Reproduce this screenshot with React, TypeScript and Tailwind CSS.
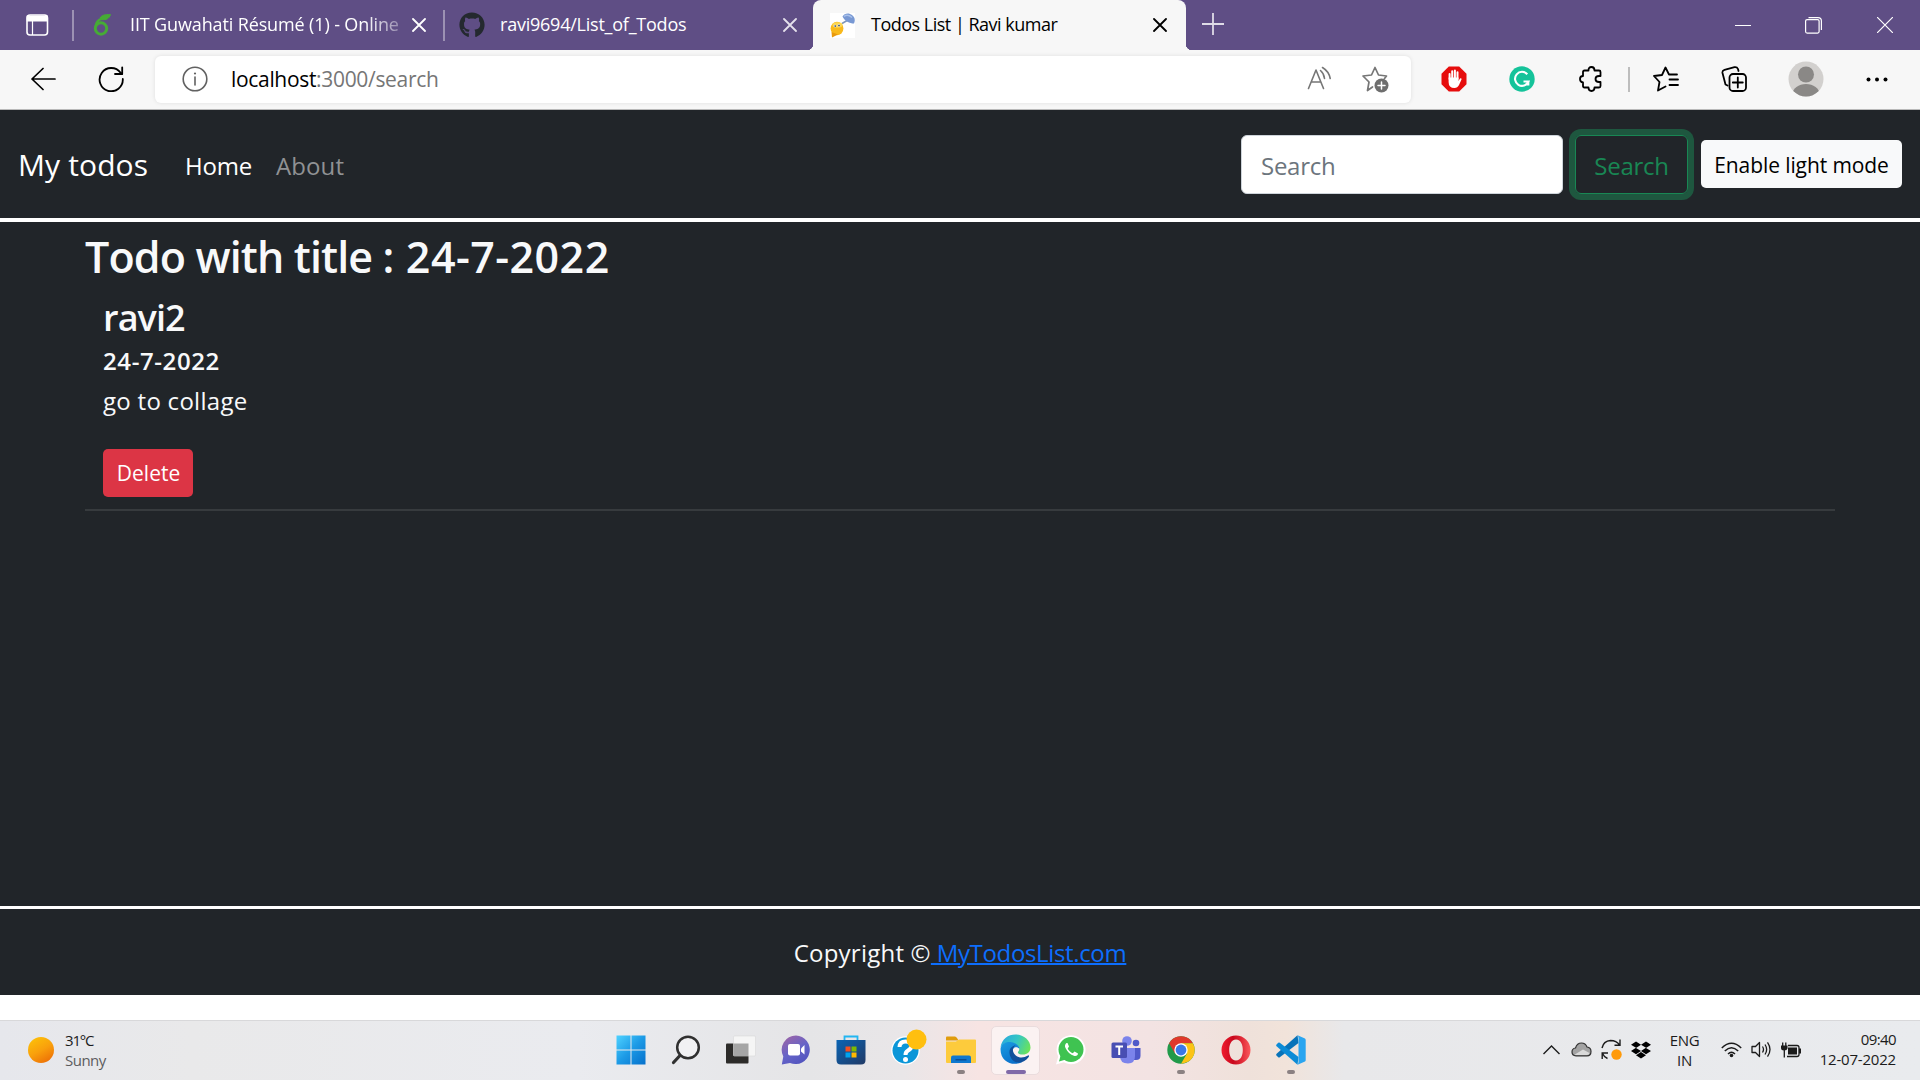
import React from "react";
import { FaGithub, FaDropbox } from "react-icons/fa";

function CloseGlyph({ className = "" }: { className?: string }) {
  return (
    <svg width="14" height="14" viewBox="0 0 14 14" className={"shrink-0 " + className} fill="none" stroke="currentColor" strokeWidth="1.8" strokeLinecap="round">
      <path d="M1 1L13 13M13 1L1 13" />
    </svg>
  );
}

function TabBar() {
  return (
    <div className="flex h-[50px] items-center bg-[#5f4e85] text-[18px] text-white">
      <svg className="ml-[26px] shrink-0" width="23" height="22" viewBox="0 0 23 22" fill="none" stroke="white" strokeWidth="1.6">
        <rect x="1" y="1" width="20.5" height="20" rx="3" />
        <path d="M1.5 2.2h19.5v4.4h-19.5z" fill="white" />
        <path d="M6.5 6v15" strokeWidth="1.2" />
      </svg>
      <div className="ml-[23px] h-[31px] w-[2px] shrink-0 bg-[#9c91b3]" />
      <div className="flex h-full w-[369px] shrink-0 items-center">
        <svg className="ml-[19px] shrink-0" width="20" height="22" viewBox="0 0 20 22" fill="none" stroke="#46ab36">
          <circle cx="8" cy="14.5" r="5.7" strokeWidth="3" />
          <path d="M2.6 13C3 7 7 3.5 14 4" strokeWidth="2.4" />
          <path d="M7 4C9 .8 12 .6 17.5.6C16 5 13 6 9 5.6" fill="#46ab36" strokeWidth="1" />
        </svg>
        <div className="mb-[2px] ml-[17px] w-[270px] overflow-hidden whitespace-nowrap tracking-[-0.13px] [mask-image:linear-gradient(to_right,black_87%,#0005_100%)]">
          IIT Guwahati Résumé (1) - Online
        </div>
        <CloseGlyph className="ml-[12px]" />
      </div>
      <div className="h-[31px] w-[2px] shrink-0 bg-[#9c91b3]" />
      <div className="flex h-full w-[368px] shrink-0 items-center">
        <FaGithub size={26} color="#24292f" className="ml-[14px] shrink-0" />
        <div className="mb-[2px] ml-[15px] w-[270px] whitespace-nowrap tracking-[-0.23px]">ravi9694/List_of_Todos</div>
        <CloseGlyph className="ml-[13px] text-[#e4e0ec]" />
      </div>
      <div className="relative flex h-full w-[373px] shrink-0 items-center rounded-t-[8px] bg-[#f7f7f7] text-black">
        <span className="absolute bottom-0 -left-[6px] h-[6px] w-[6px] bg-[radial-gradient(circle_at_0_0,#5f4e85_6px,#f7f7f7_6.5px)]" />
        <span className="absolute bottom-0 -right-[6px] h-[6px] w-[6px] bg-[radial-gradient(circle_at_100%_0,#5f4e85_6px,#f7f7f7_6.5px)]" />
        <svg className="ml-[17px] shrink-0" width="25" height="25" viewBox="0 0 25 25">
          <rect width="25" height="25" fill="white" />
          <path d="M12 10.500L18 7" stroke="#7f95b8" strokeWidth="1.5" />
          <path d="M12.500 3.500C14 1 17 0 20 1C24 2.500 26 6 24 10.500C19.500 10.500 14.500 8 12.500 3.500Z" fill="#7898d3" />
          <path d="M14 3.500C16 1.800 19 2 22 4.500" stroke="#a9c1ea" strokeWidth="1.6" fill="none" />
          <ellipse cx="7" cy="15.500" rx="6.400" ry="6.800" fill="#f9b91c" />
          <path d="M1.500 19L2 24.500L8 21.500Z" fill="#e99a0c" />
          <ellipse cx="7.500" cy="12" rx="5" ry="2.800" fill="#fdd752" />
          <circle cx="5" cy="13" r="1.300" fill="#dde5ee" />
          <circle cx="8.800" cy="12.500" r="1.300" fill="#dde5ee" />
          <circle cx="5.200" cy="13.100" r=".8" fill="#2c3c5a" />
          <circle cx="9" cy="12.600" r=".8" fill="#2c3c5a" />
        </svg>
        <div className="mb-[2px] ml-[16px] w-[270px] whitespace-nowrap tracking-[-0.5px]">Todos List | Ravi kumar</div>
        <CloseGlyph className="ml-[12px]" />
      </div>
      <svg className="mb-[2px] ml-[16px] shrink-0" width="22" height="22" viewBox="0 0 22 22" stroke="#dfdce7" strokeWidth="1.8">
        <path d="M0 11h22M11 0v22" />
      </svg>
      <div className="ml-auto flex items-center pr-[27px]">
        <svg width="16" height="16" viewBox="0 0 16 16" stroke="white"><path d="M0 8.500h16" /></svg>
        <svg className="ml-[54px]" width="17" height="17" viewBox="0 0 17 17" fill="none" stroke="white" strokeWidth="1.200">
          <rect x=".6" y="2.600" width="13.500" height="13.500" rx="1.500" />
          <path d="M3.500 .6H13Q16.400 .6 16.400 4V13" />
        </svg>
        <svg className="ml-[55px]" width="16" height="16" viewBox="0 0 16 16" stroke="white" strokeWidth="1.200"><path d="M0 0L16 16M16 0L0 16" /></svg>
      </div>
    </div>
  );
}

function Toolbar() {
  return (
    <div className="flex h-[60px] items-center border-b border-[#b9b9b9] bg-[#f7f7f7] pb-[1px]">
      <svg className="ml-[31px] shrink-0" width="25" height="24" viewBox="0 0 25 24" fill="none" stroke="black" strokeWidth="1.700" strokeLinecap="round" strokeLinejoin="round">
        <path d="M12 1.500L1 12L12 22.500M1 12H24" />
      </svg>
      <svg className="ml-[42px] shrink-0" width="27" height="26" viewBox="0 0 27 26" fill="none" stroke="black" strokeWidth="1.800" strokeLinecap="round" strokeLinejoin="round">
        <path d="M24.800 13A11.600 11.600 0 1 1 22.600 6.800L24 8" />
        <path d="M24.200 1.300V8H17" />
      </svg>
      <div className="ml-[30px] flex h-[47px] w-[1256px] shrink-0 items-center rounded-[6px] bg-white shadow-[0_0_4px_rgba(0,0,0,0.1)]">
        <svg className="ml-[27px] shrink-0" width="26" height="26" viewBox="0 0 26 26" fill="none" stroke="#616161" strokeWidth="1.600">
          <circle cx="13" cy="13" r="11.800" />
          <path d="M13 11V19" strokeLinecap="round" />
          <circle cx="13" cy="7.500" r="1.100" fill="#616161" stroke="none" />
        </svg>
        <div className="ml-[23px] pt-[2px] whitespace-nowrap text-[21px] tracking-[-0.32px] text-[#767676]">
          <span className="text-black">localhost</span>:3000/search
        </div>
        <svg className="mb-[2px] ml-auto shrink-0" width="25" height="24" viewBox="0 0 25 24" fill="none" stroke="#767676" strokeWidth="1.600" strokeLinecap="round" strokeLinejoin="round">
          <path d="M1.500 22.500L9 4L16.500 22.500M4.200 16H13.800" />
          <path d="M13.500 4.500Q17 7.500 17.500 12.500M15.500 1.500Q22 5.500 23.200 12.500" />
        </svg>
        <svg className="mr-[22px] ml-[30px] shrink-0" width="27" height="27" viewBox="0 0 27 27" fill="none" stroke="#767676" strokeWidth="1.700" strokeLinejoin="round" strokeLinecap="round">
          <path d="M10.500 21L5.500 24.500L7 16L1 10L9.500 9L13 1.500L16.500 9L24.500 10L22.500 12.500" />
          <circle cx="19.500" cy="19.500" r="7" fill="#6e6e6e" stroke="none" />
          <path d="M16 19.500H23M19.500 16V23" stroke="white" strokeWidth="1.500" />
        </svg>
      </div>
      <svg className="ml-[30px] shrink-0" width="26" height="26" viewBox="0 0 26 26">
        <path d="M7.800 .5H18.200L25.500 7.800V18.200L18.200 25.500H7.800L.5 18.200V7.800Z" fill="#e60d0d" />
        <path d="M8.600 13V8M11.200 13V5.200M13.900 13V4.500M16.500 13V6.300" stroke="white" strokeWidth="2" strokeLinecap="round" />
        <path d="M7.600 11.500H17.500V15L19 12.500Q20.800 11.800 20.500 13.500L18 19Q16.500 22 13.500 22Q7.600 22 7.600 16Z" fill="white" />
      </svg>
      <svg className="ml-[42px] shrink-0" width="26" height="26" viewBox="0 0 26 26" fill="none" stroke="white" strokeWidth="2.100">
        <circle cx="13" cy="13" r="12.700" fill="#15c39a" stroke="none" />
        <path d="M18.300 8.200A7 7 0 1 0 19.500 15.500H14.500M19.300 14.500V19.500" />
      </svg>
      <svg className="ml-[44px] shrink-0" width="25" height="26" viewBox="0 0 25 26" fill="none" stroke="black" strokeWidth="1.800" strokeLinejoin="round">
        <path d="M5.500 4.500H9.500Q9.500 1 12.500 1Q15.500 1 15.500 4.500H20Q21.500 4.500 21.500 6V10H20Q16.500 10 16.500 13Q16.500 16 20 16H21.500V20Q21.500 21.500 20 21.500H15.500Q15.500 25 12.500 25Q9.500 25 9.500 21.500H5.500Q4 21.500 4 20V16.500Q1 16 1 13Q1 10 4 10V6Q4 4.500 5.500 4.500Z" />
      </svg>
      <div className="ml-[24px] h-[25px] w-[2px] shrink-0 bg-[#bdbdbd]" />
      <svg className="ml-[23px] shrink-0" width="26" height="26" viewBox="0 0 26 26" fill="none" stroke="black" strokeWidth="1.800" strokeLinejoin="round" strokeLinecap="round">
        <path d="M12.500 20.500L5 24.500L6.500 16L1 10L9 9L12.500 1.500L16 8.500H24M16.500 13.500H25M16.500 19H25" />
      </svg>
      <svg className="ml-[42px] shrink-0" width="27" height="27" viewBox="0 0 27 27" fill="none" stroke="black" strokeWidth="1.800" strokeLinejoin="round" strokeLinecap="round">
        <path d="M6.500 19.500L4.500 18.500L1.500 7Q1 4.500 3.500 3.800L13.500 1.200Q16 .8 17 3L17.500 5" />
        <rect x="8.500" y="8" width="16.500" height="17" rx="3.500" />
        <path d="M11.800 16.500H21.800M16.800 11.500V21.500" />
      </svg>
      <svg className="ml-[40px] shrink-0" width="36" height="36" viewBox="0 0 36 36">
        <defs><clipPath id="avatar"><circle cx="18" cy="18" r="17.500" /></clipPath></defs>
        <circle cx="18" cy="18" r="17.500" fill="#d2d0ce" />
        <g clipPath="url(#avatar)" fill="#8a8886">
          <circle cx="18" cy="13.500" r="8" />
          <ellipse cx="18" cy="33" rx="13.500" ry="10" />
        </g>
      </svg>
      <svg className="ml-[42px] shrink-0" width="22" height="5" viewBox="0 0 22 5"><circle cx="2.500" cy="2.500" r="2" /><circle cx="11" cy="2.500" r="2" /><circle cx="19.500" cy="2.500" r="2" /></svg>
    </div>
  );
}

function Navbar() {
  return (
    <nav className="flex h-[108px] items-center pl-[18px] pr-[18px] text-white">
      <div className="w-[167px] whitespace-nowrap text-[30px] tracking-[0.12px]">My todos</div>
      <div className="w-[91px] pt-[3px] text-[24px] tracking-[-0.2px]">Home</div>
      <div className="pt-[3px] text-[24px] tracking-[0.1px] text-[#909294]">About</div>
      <input
        className="ml-auto h-[59px] w-[322px] rounded-[6px] border-[1.5px] border-[#ced4da] bg-white px-[19px] pt-[2px] text-[24px] tracking-[-0.26px] outline-none placeholder:text-[#6c757d]"
        placeholder="Search"
      />
      <button className="ml-[12px] h-[59px] w-[113px] rounded-[6px] border-[1.5px] border-[#198754] pt-[3px] text-[24px] tracking-[-0.26px] text-[#198754] shadow-[0_0_0_6px_#1e573f]">
        Search
      </button>
      <button className="ml-[13px] h-[48px] w-[201px] rounded-[5px] bg-[#f8f9fa] pt-[3px] text-[21px] tracking-[-0.1px] text-black">Enable light mode</button>
    </nav>
  );
}

function Page() {
  return (
    <div className="flex h-[885px] flex-col bg-[#212529] text-[#f8f9fa]">
      <Navbar />
      <main className="h-[688px] border-t-[4px] border-white px-[85px] pt-[9px]">
        <h2 className="text-[43px] leading-[52px] font-semibold tracking-[-0.85px] whitespace-pre">
          Todo with title : <span className="ml-[2px] tracking-[0.45px]">24-7-2022</span>
        </h2>
        <div className="pl-[18px]">
          <h4 className="mt-[13px] text-[36px] leading-[43px] font-semibold tracking-[-0.9px]">ravi2</h4>
          <h6 className="mt-[7px] text-[24px] leading-[29px] font-semibold tracking-[0.6px]">24-7-2022</h6>
          <p className="mt-[8px] text-[24px] leading-[36px] tracking-[0.28px]">go to collage</p>
          <button className="mt-[30px] block h-[48px] w-[90px] rounded-[5px] bg-[#dc3545] pt-[2px] pl-[1px] text-[21px] text-white">Delete</button>
        </div>
        <div className="mt-[12px] h-[2px] bg-[#373b3e]" />
      </main>
      <footer className="grow border-t-[3px] border-white pt-[26px] text-center text-[24px] leading-[36px] whitespace-pre">
        <span className="tracking-[0.23px]">Copyright ©</span>
        <a className="tracking-[-0.35px] text-[#0d6efd] underline decoration-2"> MyTodosList.com</a>
      </footer>
    </div>
  );
}

function Slot({ children, mark, active }: { children: React.ReactNode; mark?: boolean; active?: boolean }) {
  return (
    <div className="relative flex h-full w-[55px] shrink-0 items-center justify-center">
      {active && <div className="absolute top-[5px] left-[3px] h-[49px] w-[49px] rounded-[5px] border border-[#eadcdd] bg-[#fbf2f2]" />}
      <div className="relative">{children}</div>
      {mark && <div className="absolute bottom-[4px] h-[4px] w-[8px] rounded-full bg-[#8b8182]" />}
      {active && <div className="absolute bottom-[4px] h-[4px] w-[20px] rounded-full bg-[#8069a8]" />}
    </div>
  );
}

function TaskIcons() {
  return (
    <>
      <Slot>
        <svg width="30" height="30" viewBox="0 0 30 30">
          <defs><linearGradient id="win" x1="0" y1="0" x2="1" y2="1"><stop stopColor="#4fd2ff" /><stop offset=".5" stopColor="#1c9ae6" /><stop offset="1" stopColor="#0670cb" /></linearGradient></defs>
          <path d="M.5.500H14.500V14.500H.5ZM15.500.500H29.500V14.500H15.500ZM.5 15.500H14.500V29.500H.5ZM15.500 15.500H29.500V29.500H15.500Z" fill="url(#win)" />
        </svg>
      </Slot>
      <Slot>
        <svg width="30" height="30" viewBox="0 0 30 30" fill="none" stroke="#303030" strokeLinecap="round">
          <circle cx="17" cy="12.500" r="10.800" fill="#f1f1f3" strokeWidth="2.500" />
          <path d="M9 20.500L2.500 27.500" strokeWidth="3.200" />
        </svg>
      </Slot>
      <Slot>
        <svg width="31" height="30" viewBox="0 0 31 30">
          <rect x="1" y="8.500" width="22.500" height="20" rx="1" fill="#2c2b29" />
          <rect x="8.500" y="1" width="22" height="20" rx="1" fill="#f5f5f5" stroke="#d9d9d9" strokeWidth=".6" />
          <rect x="8.500" y="8.500" width="15" height="12.500" fill="#a5a5a5" />
        </svg>
      </Slot>
      <Slot>
        <svg width="30" height="30" viewBox="0 0 30 30">
          <defs><linearGradient id="chat" x1=".2" y1="0" x2=".8" y2="1"><stop stopColor="#9b65a8" /><stop offset=".5" stopColor="#6664c8" /><stop offset="1" stopColor="#4f52bd" /></linearGradient></defs>
          <path d="M15 .5A14.300 14.300 0 1 1 9 28L.8 29.500L2.300 21.500A14.300 14.300 0 0 1 15 .5Z" fill="url(#chat)" />
          <rect x="7" y="9" width="12" height="11.500" rx="2" fill="white" />
          <path d="M20 13.500L23.500 10V19.500L20 16.500Z" fill="white" />
        </svg>
      </Slot>
      <Slot>
        <svg width="30" height="30" viewBox="0 0 30 30">
          <defs><linearGradient id="store" x1="0" y1="0" x2="1" y2="1"><stop stopColor="#0a64b4" /><stop offset="1" stopColor="#213a66" /></linearGradient></defs>
          <path d="M8.500 6V1.500H21.500V6" fill="none" stroke="#22b6f2" strokeWidth="1.800" />
          <path d="M.5 5H29.500V25Q29.500 29.500 25 29.500H5Q.5 29.500 .5 25Z" fill="url(#store)" />
          <path d="M9.500 11.500h5v5h-5z" fill="#f25022" /><path d="M15.500 11.500h5v5h-5z" fill="#7fba00" /><path d="M9.500 17.500h5v5h-5z" fill="#00a4ef" /><path d="M15.500 17.500h5v5h-5z" fill="#ffb900" />
        </svg>
      </Slot>
      <Slot>
        <svg width="36" height="36" viewBox="0 0 36 36" className="-mt-[6px] ml-[6px]">
          <circle cx="14.500" cy="21.500" r="14.300" fill="white" />
          <circle cx="14.500" cy="21.500" r="13" fill="#0b96d8" />
          <path d="M8.500 18Q8.800 12.500 14.500 12.500Q20.500 12.500 20.500 17Q20.500 19.500 17 21.500Q14.500 23 14.500 26" stroke="white" strokeWidth="4" fill="none" />
          <circle cx="14.500" cy="30.500" r="2.500" fill="white" />
          <circle cx="25.500" cy="10.500" r="10" fill="#ffbf0f" />
        </svg>
      </Slot>
      <Slot mark>
        <svg width="30" height="28" viewBox="0 0 30 28">
          <path d="M0 1.500Q0 .5 1 .5H9Q10 .5 11 2L12.500 4.500H0Z" fill="#e09c0d" />
          <path d="M0 5.500H10L13 3.500H29Q30 3.500 30 4.500V26Q30 27 29 27H1Q0 27 0 26Z" fill="#fdcb3c" />
          <path d="M5 27V21.500Q5 19.500 7 19.500H23Q25 19.500 25 21.500V27Z" fill="#0f78cf" />
          <path d="M9.500 24.500V23H20.500V24.500Z" fill="#0a4f96" />
        </svg>
      </Slot>
      <Slot active>
        <svg width="31" height="31" viewBox="0 0 31 31">
          <defs>
            <linearGradient id="edgeTop" x1="0" y1=".3" x2="1" y2=".6"><stop stopColor="#2aa9dd" /><stop offset=".5" stopColor="#35c6c4" /><stop offset="1" stopColor="#6be35a" /></linearGradient>
            <linearGradient id="edgeLeft" x1="0" y1="0" x2=".6" y2="1"><stop stopColor="#1b9de2" /><stop offset="1" stopColor="#0a6fca" /></linearGradient>
          </defs>
          <path d="M.5 13C2 5 8 .5 15.500 .5C24 .5 30.500 6.500 30.500 13.500C30.500 18 27 20.500 23 20.500C19 20.500 17.500 19 18 18C19.500 16 20 14.500 18 12C13 7 4 8 .5 13Z" fill="url(#edgeTop)" />
          <path d="M.5 15C1 9.500 6 7.500 10.500 8C16 8.500 19.500 12 19.500 15C17 11.500 12 13 12 19C12 25 18 28 22 28C14 32.500 .5 29 .5 15Z" fill="url(#edgeLeft)" />
          <path d="M9.500 19C9 14 13 11.500 15.500 11.500C12 14 12.500 17 14 19.500C17 24 23 24.500 28 21.500C29 21 29.300 22 28.700 23C24 30.500 11 31.500 9.500 19Z" fill="#10509b" />
        </svg>
      </Slot>
      <Slot>
        <svg width="31" height="31" viewBox="0 0 31 31">
          <path d="M1 30.500L3.200 22.500A14.500 14.500 0 1 1 8.800 28.300Z" fill="white" />
          <circle cx="16" cy="15.500" r="12.500" fill="#3fc351" />
          <path d="M4 27.500L6 20L11 25.500Z" fill="#3fc351" />
          <path d="M11.500 9C10 10 9.500 12 10.500 14C12.500 18 15 20.500 19.500 22C21.500 22.500 23 21 23 19.500L19.500 17.500L17.800 19.300C15.500 18.500 13.500 16.500 12.700 14.500L14 12.500L12.500 9Z" fill="white" />
        </svg>
      </Slot>
      <Slot>
        <svg width="30" height="28" viewBox="0 0 30 28">
          <circle cx="25" cy="7" r="3.300" fill="#5059c9" />
          <path d="M21 12H29.500V20Q29.500 24 25 24H21Z" fill="#5059c9" />
          <circle cx="16" cy="5" r="4.800" fill="#7b83eb" />
          <path d="M9 12H24V20Q24 27.500 17 27.500Q9 27.500 9 20Z" fill="#7b83eb" />
          <rect x=".5" y="6.500" width="15.500" height="15.500" rx="1.500" fill="#484eb3" />
          <path d="M4.500 10.500H12M8.200 10.500V19" stroke="white" strokeWidth="2" />
        </svg>
      </Slot>
      <Slot mark>
        <svg width="28" height="28" viewBox="0 0 28 28">
          <circle cx="14" cy="14" r="13.700" fill="#219a4a" />
          <path d="M2.100 7.200A13.700 13.700 0 0 1 25.900 7.200L14 7.200V14L8 17.500Z" fill="#e0382b" />
          <path d="M25.900 7.200A13.700 13.700 0 0 1 14 27.700L20 17.500L14 7.200Z" fill="#fcc316" />
          <circle cx="14" cy="14" r="6.700" fill="white" /><circle cx="14" cy="14" r="5.400" fill="#3b78e7" />
        </svg>
      </Slot>
      <Slot>
        <svg width="30" height="30" viewBox="0 0 30 30">
          <defs><linearGradient id="opera" x1="0" y1="0" x2="1" y2="0"><stop stopColor="#f01b2e" /><stop offset=".4" stopColor="#c9091e" /><stop offset=".7" stopColor="#e02b38" /><stop offset="1" stopColor="#fb5a5e" /></linearGradient></defs>
          <path fillRule="evenodd" d="M15 .5A14.500 14.500 0 1 1 15 29.500A14.500 14.500 0 1 1 15 .5ZM15 4.500C10 4.500 8.200 10 8.200 15S10 25.500 15 25.500S21.800 20 21.800 15S20 4.500 15 4.500Z" fill="url(#opera)" />
        </svg>
      </Slot>
      <Slot mark>
        <svg width="30" height="30" viewBox="0 0 30 30">
          <path d="M21.500 .3L22.500 8L3.800 22.300Q3 22.800 2.200 22.200L.5 20.500Q-.2 19.500 .6 18.700Z" fill="#0873b9" />
          <path d="M21.500 29.700L22.500 22L3.800 7.700Q3 7.200 2.200 7.800L.5 9.500Q-.2 10.500 .6 11.300Z" fill="#0c8bd6" />
          <path d="M21.500 .3L29 3.500Q29.700 4 29.700 5V25Q29.700 26 29 26.500L21.500 29.700Q22.500 28.500 22.500 27V3Q22.500 1.500 21.500 .3Z" fill="#2aa5f0" />
        </svg>
      </Slot>
    </>
  );
}

function Taskbar() {
  return (
    <div className="flex h-[60px] items-center border-t border-[#d8d8da] bg-[linear-gradient(to_right,#e6e7ec_0%,#e9e9ea_10%,#eaebef_30%,#e5e5e7_42%,#e9e6e8_47%,#f7e4e3_51%,#f3e3e3_60%,#efe1da_65%,#f1e3da_67%,#e8e8ea_70%,#e9ebee_100%)] pb-[2px] text-[15px] leading-[20px] text-[#1b1b1b]">
      <div className="flex w-[603px] shrink-0 items-center">
        <div className="ml-[28px] h-[26px] w-[26px] rounded-full bg-[linear-gradient(150deg,#fdc608,#f9a00c_50%,#ea6405)]" />
        <div className="ml-[11px]">
          <div className="tracking-[-1.2px]">31°C</div>
          <div className="tracking-[-0.5px] text-[#5c5c5e]">Sunny</div>
        </div>
      </div>
      <TaskIcons />
      <div className="ml-auto flex items-center pr-[24px]">
        <svg width="17" height="10" viewBox="0 0 17 10" fill="none" stroke="#1b1b1b" strokeWidth="1.400"><path d="M.5 9L8.500 1L16.500 9" /></svg>
        <svg className="ml-[11px]" width="21" height="15" viewBox="0 0 21 15" stroke="#333" strokeWidth="1.200">
          <path d="M5 13.800Q1 13.500 1 10Q1 6.500 4.500 6Q6 1 10.500 1Q14.500 1 16 5Q20 5.500 20 9.500Q20 13.800 16 13.800Z" fill="#a3a3a3" />
          <path d="M3.500 12.800L12 7.500L18.500 11Q18 13 16 13H5Z" fill="#dadada" stroke="none" />
        </svg>
        <svg className="ml-[9px]" width="21" height="21" viewBox="0 0 21 21" fill="none" stroke="#1b1b1b" strokeWidth="1.400">
          <path d="M1 9Q2.500 2 9.500 1.500Q15.500 1.500 18.500 6M19 .5V6.200H13.500M6.500 19.500Q3 18 1.500 14.500M1.200 20V14H7" />
          <circle cx="15.500" cy="15.500" r="5.200" fill="#ff9a0a" stroke="none" />
        </svg>
        <FaDropbox size={20} color="black" className="ml-[9px]" />
        <div className="ml-[18px] w-[31px] text-center tracking-[-0.3px]">
          <div>ENG</div>
          <div>IN</div>
        </div>
        <svg className="ml-[21px]" width="21" height="16" viewBox="0 0 21 16" fill="none" stroke="#1b1b1b" strokeWidth="1.500">
          <path d="M.8 6Q10.500 -3.500 20.200 6M3.800 9Q10.500 2.500 17.200 9M7 12Q10.500 8.500 14 12" />
          <circle cx="10.500" cy="13.500" r="1.800" fill="#1b1b1b" stroke="none" />
        </svg>
        <svg className="ml-[9px]" width="21" height="17" viewBox="0 0 21 17" fill="none" stroke="#1b1b1b" strokeWidth="1.300" strokeLinejoin="round">
          <path d="M1 5.500H4.500L8.500 1.500V15.500L4.500 11.500H1ZM11.500 5.500Q13.500 8.500 11.500 11.500M14 3.500Q17.300 8.500 14 13.500M16.500 1.300Q21.500 8.500 16.500 15.700" />
        </svg>
        <svg className="ml-[9px]" width="21" height="16" viewBox="0 0 21 16" fill="none" stroke="#1b1b1b" strokeWidth="1.300">
          <path d="M7 3.500H16Q18 3.500 18 5.500V12.500Q18 14.500 16 14.500H6" />
          <rect x="7" y="5.500" width="9" height="7" fill="#1b1b1b" stroke="none" />
          <path d="M19 6.500V11.500" strokeWidth="2" />
          <path d="M0 3.500H6.500V6.500Q6 8.500 3.300 8.500Q0 8.500 0 6Z" fill="#1b1b1b" stroke="none" />
          <path d="M1.700 .5V4M4.800 .5V4M3.300 8V15.500" />
        </svg>
        <div className="mb-[2px] ml-[16px] w-[78px] text-right tracking-[-0.2px] whitespace-nowrap">
          <div className="tracking-[-0.6px]">09:40</div>
          <div>12-07-2022</div>
        </div>
      </div>
    </div>
  );
}

export default function App() {
  return (
    <div className="flex h-[1080px] w-[1920px] flex-col overflow-hidden bg-white font-['Open_Sans',sans-serif]">
      <TabBar />
      <Toolbar />
      <Page />
      <div className="h-[25px] bg-white" />
      <Taskbar />
    </div>
  );
}
